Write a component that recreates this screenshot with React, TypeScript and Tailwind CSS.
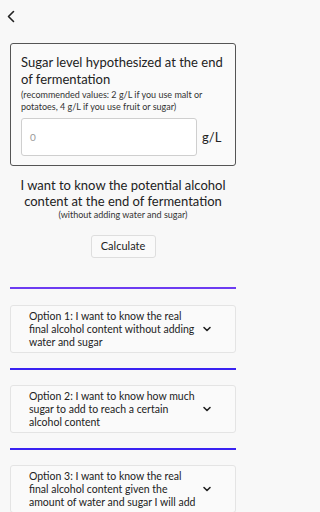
import React from "react";

function Chevron() {
  return (
    <svg width="10" height="10" viewBox="0 0 10 10" className="shrink-0">
      <path d="M2 3.5 L5 6.5 L8 3.5" fill="none" stroke="#222" strokeWidth="1.6" strokeLinecap="round" strokeLinejoin="round" />
    </svg>
  );
}

function Option({ text }: { text: string }) {
  return (
    <div className="mx-[10px] h-[48px] rounded-[3px] border border-[#e4e4e4] bg-[#fafafa] flex items-center pl-[18px] pr-[23px]">
      <div className="w-[172px] text-[10.5px] leading-[13px] text-[#222]">{text}</div>
      <div className="flex-1" />
      <Chevron />
    </div>
  );
}

export default function App() {
  return (
    <div className="w-full min-h-[512px] bg-[#f8f8f8]">
      <div className="w-[246px] h-[512px] overflow-hidden bg-[#f8f8f8] text-[#222]" style={{ fontFamily: "Lato, 'Noto Sans', sans-serif" }}>
        <div className="h-[43px] pl-[6px] pt-[10px]">
          <svg width="10" height="13" viewBox="0 0 10 13">
            <path d="M7.5 1.5 L2.5 6.5 L7.5 11.5" fill="none" stroke="#222" strokeWidth="1.6" strokeLinecap="round" strokeLinejoin="round" />
          </svg>
        </div>
        <div className="mx-[10px] h-[123px] rounded-[3px] border border-[#555] bg-[#fafafa] pl-[10px] pr-[6px] pt-[10px]">
          <div className="text-[13px] leading-[17px] text-[#222]">Sugar level hypothesized at the end of fermentation</div>
          <div className="text-[9px] leading-[12px] text-[#333] mt-[1px]">(recommended values: 2 g/L if you use malt or potatoes, 4 g/L if you use fruit or sugar)</div>
          <div className="flex items-center mt-[5px]">
            <div className="w-[176px] h-[38px] rounded-[3px] border border-[#cfcfcf] bg-white flex items-center pl-[8px] text-[10px] text-[#999]">0</div>
            <div className="ml-[5px] text-[13px] text-[#222] mt-[2px]">g/L</div>
          </div>
        </div>
        <div className="mt-[11px] px-[10px] text-center text-[13px] leading-[16px] text-[#222]">I want to know the potential alcohol content at the end of fermentation</div>
        <div className="text-center text-[9px] leading-[12px] text-[#333]">(without adding water and sugar)</div>
        <div className="flex justify-center mt-[14px]">
          <div className="w-[65px] h-[23px] rounded-[3px] border border-[#dedede] bg-[#fafafa] flex items-center justify-center text-[11px] text-[#222]">Calculate</div>
        </div>
        <div className="mx-[10px] mt-[29px] h-[2px] bg-[#6d3cf2]" />
        <div className="mt-[16px]">
          <Option text="Option 1: I want to know the real final alcohol content without adding water and sugar" />
        </div>
        <div className="mx-[10px] mt-[15px] h-[2px] bg-[#3a22f2]" />
        <div className="mt-[15px]">
          <Option text="Option 2: I want to know how much sugar to add to reach a certain alcohol content" />
        </div>
        <div className="mx-[10px] mt-[15px] h-[2px] bg-[#3a22f2]" />
        <div className="mt-[15px]">
          <Option text="Option 3: I want to know the real final alcohol content given the amount of water and sugar I will add" />
        </div>
      </div>
    </div>
  );
}
